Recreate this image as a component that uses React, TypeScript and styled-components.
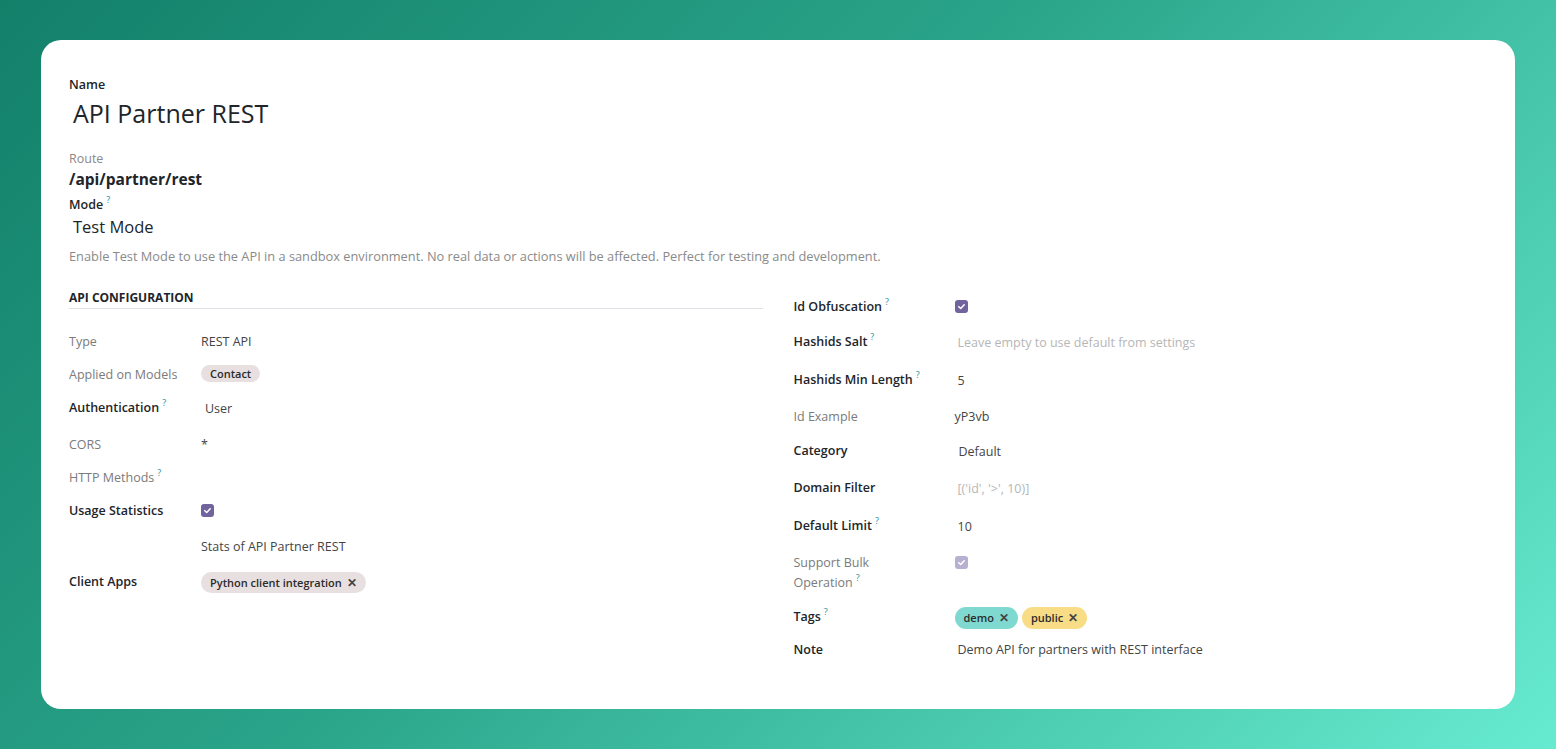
import React from "react";
import styled, { createGlobalStyle } from "styled-components";

const Global = createGlobalStyle`
  html, body { margin: 0; padding: 0; }
  body {
    font-family: "Open Sans", "Noto Sans", "Liberation Sans", sans-serif;
    color: #212529;
  }
  * { box-sizing: border-box; }
`;

const Page = styled.div`
  width: 1556px;
  height: 749px;
  padding: 40px 41px;
  background: linear-gradient(135deg, #13806a 0%, #2aa58a 45%, #67ebd0 100%);
`;

const Card = styled.div`
  background: #fff;
  border-radius: 20px;
  height: 669px;
  padding: 36px 28px 0 28px;
`;

const SmallLabel = styled.div<{ $muted?: boolean; $mt?: number }>`
  font-size: 12.5px;
  line-height: 18px;
  font-weight: ${(p) => (p.$muted ? 400 : 600)};
  color: ${(p) => (p.$muted ? "#8a8a8a" : "#212529")};
  margin-top: ${(p) => p.$mt ?? 0}px;
`;

const Title = styled.div`
  font-size: 25px;
  line-height: 34px;
  margin: 2px 0 0 4px;
  color: #212529;
`;

const RoutePath = styled.div`
  font-size: 15.5px;
  line-height: 22px;
  font-weight: 700;
  color: #212529;
`;

const ModeValue = styled.div`
  font-size: 16.5px;
  line-height: 24px;
  margin: 1px 0 0 4px;
  color: #212529;
`;

const Help = styled.div`
  font-size: 12.8px;
  line-height: 18px;
  color: #8a8a8a;
  margin-top: 8px;
`;

const Sup = styled.sup`
  color: #1e8f9e;
  font-size: 9px;
  font-weight: 400;
  margin-left: 3px;
  vertical-align: 6px;
  line-height: 0;
`;

const Columns = styled.div`
  display: grid;
  grid-template-columns: 1fr 1fr;
  column-gap: 31px;
  margin-top: 24px;
`;

const Column = styled.div<{ $pt?: number }>`
  display: flex;
  flex-direction: column;
  padding-top: ${(p) => p.$pt ?? 0}px;
`;

const SectionHeader = styled.div`
  font-size: 12px;
  line-height: 18px;
  font-weight: 700;
  text-transform: uppercase;
  color: #212529;
  padding-bottom: 1px;
  border-bottom: 1px solid #dee2e6;
  margin-bottom: 23px;
`;

const Row = styled.div<{ $h: number; $label: number }>`
  display: grid;
  grid-template-columns: ${(p) => p.$label}px 1fr;
  height: ${(p) => p.$h}px;
  align-items: start;
`;

const Label = styled.div<{ $muted?: boolean }>`
  font-size: 12.5px;
  line-height: 20px;
  font-weight: ${(p) => (p.$muted ? 400 : 600)};
  color: ${(p) => (p.$muted ? "#7b7b7b" : "#212529")};
  padding-right: 8px;
`;

const Value = styled.div<{ $indent?: number; $muted?: boolean; $dy?: number }>`
  font-size: 12.5px;
  line-height: 20px;
  color: ${(p) => (p.$muted ? "#b6b6b6" : "#444")};
  padding-left: ${(p) => p.$indent ?? 0}px;
  margin-top: ${(p) => p.$dy ?? 0}px;
  display: flex;
  align-items: center;
  gap: 4px;
`;

const Check = styled.span<{ $disabled?: boolean }>`
  width: 13px;
  height: 13px;
  border-radius: 3px;
  background: ${(p) => (p.$disabled ? "#b8b0d1" : "#71639e")};
  display: inline-flex;
  align-items: center;
  justify-content: center;
  margin-top: 3px;
`;

const Pill = styled.span<{ $bg: string; $h: number }>`
  display: inline-flex;
  align-items: center;
  gap: 5px;
  height: ${(p) => p.$h}px;
  padding: 0 9px;
  border-radius: 999px;
  background: ${(p) => p.$bg};
  font-size: 11px;
  font-weight: 600;
  color: #2b2b2b;
  white-space: nowrap;
`;

const X = styled.span`
  font-size: 12px;
  font-weight: 700;
  line-height: 1;
  color: #444;
`;

const CheckIcon = () => (
  <svg width="9" height="9" viewBox="0 0 10 10">
    <path d="M2 5.2 L4.1 7.2 L8 3" fill="none" stroke="#fff" strokeWidth="1.7" strokeLinecap="round" strokeLinejoin="round" />
  </svg>
);

export default function App() {
  return (
    <>
      <Global />
      <Page>
        <Card>
          <SmallLabel>Name</SmallLabel>
          <Title>API Partner REST</Title>
          <SmallLabel $muted $mt={20}>Route</SmallLabel>
          <RoutePath>/api/partner/rest</RoutePath>
          <SmallLabel $mt={6}>
            Mode<Sup>?</Sup>
          </SmallLabel>
          <ModeValue>Test Mode</ModeValue>
          <Help>
            Enable Test Mode to use the API in a sandbox environment. No real data or actions will be affected. Perfect for testing and development.
          </Help>
          <Columns>
            <Column>
              <SectionHeader>API Configuration</SectionHeader>
              <Row $h={33} $label={132}>
                <Label $muted>Type</Label>
                <Value>REST API</Value>
              </Row>
              <Row $h={33} $label={132}>
                <Label $muted>Applied on Models</Label>
                <Value>
                  <Pill $bg="#e8e0e0" $h={17}>Contact</Pill>
                </Value>
              </Row>
              <Row $h={37} $label={132}>
                <Label>
                  Authentication<Sup>?</Sup>
                </Label>
                <Value $indent={4} $dy={1}>User</Value>
              </Row>
              <Row $h={33} $label={132}>
                <Label $muted>CORS</Label>
                <Value>*</Value>
              </Row>
              <Row $h={33} $label={132}>
                <Label $muted>
                  HTTP Methods<Sup>?</Sup>
                </Label>
                <Value />
              </Row>
              <Row $h={36} $label={132}>
                <Label>Usage Statistics</Label>
                <Value>
                  <Check>
                    <CheckIcon />
                  </Check>
                </Value>
              </Row>
              <Row $h={35} $label={132}>
                <Label />
                <Value>Stats of API Partner REST</Value>
              </Row>
              <Row $h={35} $label={132}>
                <Label>Client Apps</Label>
                <Value>
                  <Pill $bg="#e8e0e0" $h={21}>
                    Python client integration <X>✕</X>
                  </Pill>
                </Value>
              </Row>
            </Column>
            <Column $pt={8}>
              <Row $h={35} $label={161}>
                <Label>
                  Id Obfuscation<Sup>?</Sup>
                </Label>
                <Value>
                  <Check>
                    <CheckIcon />
                  </Check>
                </Value>
              </Row>
              <Row $h={38} $label={161}>
                <Label>
                  Hashids Salt<Sup>?</Sup>
                </Label>
                <Value $indent={3} $muted $dy={1}>Leave empty to use default from settings</Value>
              </Row>
              <Row $h={37} $label={161}>
                <Label>
                  Hashids Min Length<Sup>?</Sup>
                </Label>
                <Value $indent={3} $dy={1}>5</Value>
              </Row>
              <Row $h={34} $label={161}>
                <Label $muted>Id Example</Label>
                <Value>yP3vb</Value>
              </Row>
              <Row $h={37} $label={161}>
                <Label>Category</Label>
                <Value $indent={4} $dy={1}>Default</Value>
              </Row>
              <Row $h={38} $label={161}>
                <Label>Domain Filter</Label>
                <Value $indent={3} $muted $dy={1}>[('id', '&gt;', 10)]</Value>
              </Row>
              <Row $h={37} $label={161}>
                <Label>
                  Default Limit<Sup>?</Sup>
                </Label>
                <Value $indent={3} $dy={1}>10</Value>
              </Row>
              <Row $h={54} $label={161}>
                <Label $muted>
                  Support Bulk
                  <br />
                  Operation<Sup>?</Sup>
                </Label>
                <Value>
                  <Check $disabled>
                    <CheckIcon />
                  </Check>
                </Value>
              </Row>
              <Row $h={33} $label={161}>
                <Label>
                  Tags<Sup>?</Sup>
                </Label>
                <Value>
                  <Pill $bg="#7fd9d0" $h={22}>
                    demo <X>✕</X>
                  </Pill>
                  <Pill $bg="#f8dc86" $h={22}>
                    public <X>✕</X>
                  </Pill>
                </Value>
              </Row>
              <Row $h={33} $label={161}>
                <Label>Note</Label>
                <Value $indent={3}>Demo API for partners with REST interface</Value>
              </Row>
            </Column>
          </Columns>
        </Card>
      </Page>
    </>
  );
}
